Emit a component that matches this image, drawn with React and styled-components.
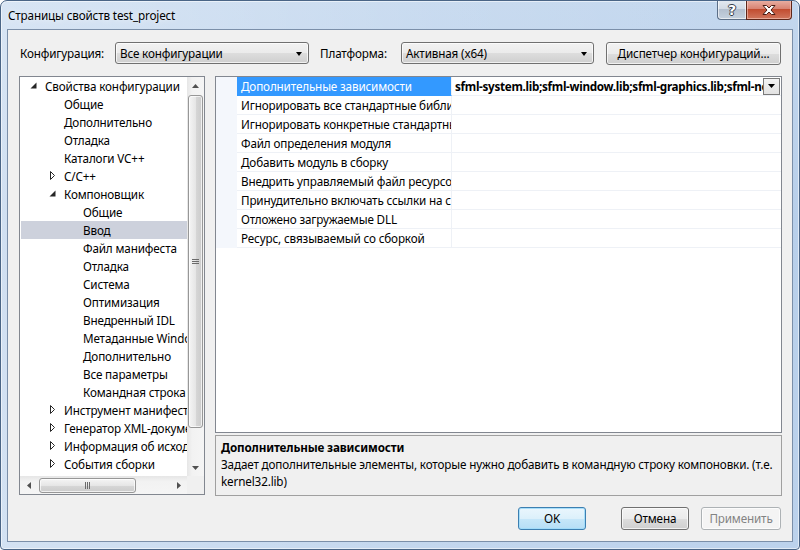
import React from "react";
import styled, { createGlobalStyle } from "styled-components";

const GlobalStyle = createGlobalStyle`
  html, body {
    margin: 0;
    padding: 0;
    background: #ffffff;
  }
  body {
    font-family: "Segoe UI", "Noto Sans", "DejaVu Sans", sans-serif;
    font-size: 11.7px;
    letter-spacing: -0.15px;
    color: #000;
  }
  * { box-sizing: border-box; }
`;

const treeItems = [
  { label: "Свойства конфигурации", level: 0, arrow: "open" },
  { label: "Общие", level: 1 },
  { label: "Дополнительно", level: 1 },
  { label: "Отладка", level: 1 },
  { label: "Каталоги VC++", level: 1 },
  { label: "C/C++", level: 1, arrow: "closed" },
  { label: "Компоновщик", level: 1, arrow: "open" },
  { label: "Общие", level: 2 },
  { label: "Ввод", level: 2, selected: true },
  { label: "Файл манифеста", level: 2 },
  { label: "Отладка", level: 2 },
  { label: "Система", level: 2 },
  { label: "Оптимизация", level: 2 },
  { label: "Внедренный IDL", level: 2 },
  { label: "Метаданные Windows", level: 2 },
  { label: "Дополнительно", level: 2 },
  { label: "Все параметры", level: 2 },
  { label: "Командная строка", level: 2 },
  { label: "Инструмент манифеста", level: 1, arrow: "closed" },
  { label: "Генератор XML-документов", level: 1, arrow: "closed" },
  { label: "Информация об исходном коде", level: 1, arrow: "closed" },
  { label: "События сборки", level: 1, arrow: "closed" },
];

const props = [
  "Дополнительные зависимости",
  "Игнорировать все стандартные библиотеки",
  "Игнорировать конкретные стандартные библиотеки",
  "Файл определения модуля",
  "Добавить модуль в сборку",
  "Внедрить управляемый файл ресурсов",
  "Принудительно включать ссылки на символы",
  "Отложено загружаемые DLL",
  "Ресурс, связываемый со сборкой",
];

const App = () => {
  return (
    <>
      <GlobalStyle />
      <Window>
        <TitleBar>
          <Title>Страницы свойств test_project</Title>
          <CaptionButtons>
            <HelpButton>?</HelpButton>
            <CloseButton>
              <svg width="16" height="12" viewBox="0 0 16 12">
                <path
                  d="M2 1.5 L5.5 1.5 L8 4 L10.5 1.5 L14 1.5 L10 6 L14 10.5 L10.5 10.5 L8 8 L5.5 10.5 L2 10.5 L6 6 Z"
                  fill="#fff"
                  stroke="#4a1d14"
                  strokeWidth="1"
                  strokeLinejoin="round"
                />
              </svg>
            </CloseButton>
          </CaptionButtons>
        </TitleBar>

        <Client>
          <ConfigRow>
            <FieldLabel width={95}>Конфигурация:</FieldLabel>
            <Combo width={194}>
              Все конфигурации
              <ComboArrow />
            </Combo>
            <FieldLabel width={81} gap={11}>Платформа:</FieldLabel>
            <Combo width={193}>
              Активная (x64)
              <ComboArrow />
            </Combo>
            <PushButton width={175} gap={12}>Диспетчер конфигураций...</PushButton>
          </ConfigRow>

          <Main>
            <TreeBox>
              <TreeBody>
                <TreeList>
                  {treeItems.map((item, i) => (
                    <TreeRow key={i} level={item.level} selected={item.selected}>
                      <ArrowSlot>
                        {item.arrow === "open" && (
                          <svg width="8" height="8" viewBox="0 0 8 8" style={{ marginLeft: -1 }}>
                            <polygon points="6.5,0.5 6.5,6.5 0.5,6.5" fill="#262626" />
                          </svg>
                        )}
                        {item.arrow === "closed" && (
                          <svg width="7" height="10" viewBox="0 0 7 10">
                            <polygon points="0.5,0.5 4.5,4.5 0.5,8.5" fill="#fff" stroke="#262626" strokeWidth="1" />
                          </svg>
                        )}
                      </ArrowSlot>
                      {item.label}
                    </TreeRow>
                  ))}
                </TreeList>
                <VScroll>
                  <ScrollArrow>
                    <svg width="7" height="4" viewBox="0 0 7 4"><polygon points="3.5,0 7,4 0,4" fill="#505050" /></svg>
                  </ScrollArrow>
                  <VTrack>
                    <VThumb>
                      <svg width="7" height="7" viewBox="0 0 7 7">
                        <path d="M0 1.5h7M0 3.5h7M0 5.5h7" stroke="#6b6b6b" strokeWidth="1" />
                      </svg>
                    </VThumb>
                  </VTrack>
                  <ScrollArrow>
                    <svg width="7" height="4" viewBox="0 0 7 4"><polygon points="0,0 7,0 3.5,4" fill="#505050" /></svg>
                  </ScrollArrow>
                </VScroll>
              </TreeBody>
              <HBar>
                <HScroll>
                  <ScrollArrow>
                    <svg width="4" height="7" viewBox="0 0 4 7"><polygon points="4,0 4,7 0,3.5" fill="#505050" /></svg>
                  </ScrollArrow>
                  <HTrack>
                    <HThumb>
                      <svg width="7" height="7" viewBox="0 0 7 7">
                        <path d="M1.5 0v7M3.5 0v7M5.5 0v7" stroke="#6b6b6b" strokeWidth="1" />
                      </svg>
                    </HThumb>
                  </HTrack>
                  <ScrollArrow>
                    <svg width="4" height="7" viewBox="0 0 4 7"><polygon points="0,0 4,3.5 0,7" fill="#505050" /></svg>
                  </ScrollArrow>
                </HScroll>
                <Corner />
              </HBar>
            </TreeBox>

            <RightColumn>
              <Grid>
                {props.map((name, i) => (
                  <GridRow key={i}>
                    <Gutter />
                    <NameCell selected={i === 0}>{name}</NameCell>
                    <ValueCell>
                      {i === 0 && (
                        <>
                          <ValueText>sfml-system.lib;sfml-window.lib;sfml-graphics.lib;sfml-network.lib;sfml-audio.lib</ValueText>
                          <ValueDrop>
                            <svg width="7" height="4" viewBox="0 0 7 4"><polygon points="0,0 7,0 3.5,4" fill="#000" /></svg>
                          </ValueDrop>
                        </>
                      )}
                    </ValueCell>
                  </GridRow>
                ))}
              </Grid>
              <Description>
                <DescTitle>Дополнительные зависимости</DescTitle>
                <DescText>
                  Задает дополнительные элементы, которые нужно добавить в командную строку компоновки. (т.е.
                  <br />
                  kernel32.lib)
                </DescText>
              </Description>
            </RightColumn>
          </Main>

          <ButtonRow>
            <PushButton width={68} primary>OK</PushButton>
            <PushButton width={68} gap={35}>Отмена</PushButton>
            <PushButton width={80} gap={12} disabled>Применить</PushButton>
          </ButtonRow>
        </Client>
      </Window>
    </>
  );
};

export default App;

const Window = styled.div`
  width: 800px;
  height: 550px;
  display: flex;
  flex-direction: column;
  padding: 0 6px 7px 6px;
  border: 1px solid #4a6586;
  border-radius: 7px 7px 4px 4px;
  background:
    linear-gradient(90deg, rgba(255,255,255,0.35) 0%, rgba(255,255,255,0.1) 55%, rgba(0,0,0,0) 100%),
    linear-gradient(180deg, #c3d7ee 0%, #b8cfea 40%, #bcd2ec 100%);
  box-shadow: inset 0 0 0 1px rgba(255,255,255,0.55);
  overflow: hidden;
`;

const TitleBar = styled.div`
  height: 28px;
  display: flex;
  justify-content: space-between;
  align-items: center;
  flex-shrink: 0;
`;

const Title = styled.div`
  padding-left: 1px;
  padding-bottom: 1px;
  color: #000;
  text-shadow: 0 0 6px rgba(255,255,255,0.9);
`;

const CaptionButtons = styled.div`
  align-self: flex-start;
  display: flex;
  margin-top: -1px;
  margin-right: 1px;
`;

const HelpButton = styled.div`
  width: 29px;
  height: 20px;
  display: flex;
  align-items: center;
  justify-content: center;
  border: 1px solid #5b6e86;
  border-top: none;
  border-right: none;
  border-radius: 0 0 0 4px;
  background: linear-gradient(180deg, #e4eaf1 0%, #d3dbe5 45%, #b4c0cf 50%, #c5d1de 100%);
  box-shadow: inset 0 0 0 1px rgba(255,255,255,0.6);
  color: #fff;
  font-family: "DejaVu Sans", sans-serif;
  font-weight: bold;
  font-size: 14px;
  letter-spacing: 0;
  text-shadow: -1px 0 #333c48, 1px 0 #333c48, 0 -1px #333c48, 0 1px #333c48;
`;

const CloseButton = styled.div`
  width: 46px;
  height: 20px;
  display: flex;
  align-items: center;
  justify-content: center;
  border: 1px solid #5e2619;
  border-top: none;
  border-radius: 0 0 4px 0;
  background: linear-gradient(180deg, #eab2a6 0%, #d98473 45%, #c24d31 50%, #d0765d 100%);
  box-shadow: inset 0 0 0 1px rgba(255,220,210,0.5);
`;

const Client = styled.div`
  flex: 1;
  display: flex;
  flex-direction: column;
  background: #f0f0f0;
  border: 1px solid #7b8fa9;
  padding: 11px 10px 0 11px;
`;

const ConfigRow = styled.div`
  height: 24px;
  display: flex;
  align-items: center;
  padding-left: 1px;
`;

const FieldLabel = styled.div`
  width: ${(p) => p.width}px;
  margin-left: ${(p) => p.gap || 0}px;
  flex-shrink: 0;
  padding-bottom: 1px;
`;

const Combo = styled.div`
  position: relative;
  width: ${(p) => p.width}px;
  height: 22px;
  flex-shrink: 0;
  display: flex;
  align-items: center;
  padding-left: 4px;
  padding-bottom: 1px;
  border: 1px solid #707070;
  border-radius: 3px;
  background: linear-gradient(180deg, #f2f2f2 0%, #ebebeb 50%, #dddddd 51%, #cfcfcf 100%);
  box-shadow: inset 0 0 0 1px rgba(255,255,255,0.7);
`;

const ComboArrow = styled.span`
  position: absolute;
  right: 6px;
  top: 9px;
  width: 0;
  height: 0;
  border-left: 3.5px solid transparent;
  border-right: 3.5px solid transparent;
  border-top: 4px solid #000;
`;

const PushButton = styled.div`
  width: ${(p) => p.width}px;
  height: 23px;
  margin-left: ${(p) => p.gap || 0}px;
  flex-shrink: 0;
  display: flex;
  align-items: center;
  justify-content: center;
  padding-bottom: 1px;
  border-radius: 3px;
  border: 1px solid ${(p) => (p.primary ? "#3c7fb1" : p.disabled ? "#adb2b5" : "#707070")};
  color: ${(p) => (p.disabled ? "#838383" : "#000")};
  background: ${(p) =>
    p.primary
      ? "linear-gradient(180deg, #eaf6fd 0%, #dcf0fb 50%, #c6e7f9 51%, #b6def6 100%)"
      : p.disabled
      ? "#f4f4f4"
      : "linear-gradient(180deg, #f2f2f2 0%, #ebebeb 50%, #dddddd 51%, #cfcfcf 100%)"};
  box-shadow: inset 0 0 0 1px ${(p) => (p.primary ? "rgba(160,220,250,0.9)" : "rgba(255,255,255,0.7)")};
`;

const Main = styled.div`
  height: 420px;
  display: flex;
  gap: 10px;
  margin-top: 11px;
  flex-shrink: 0;
`;

const TreeBox = styled.div`
  width: 186px;
  height: 419px;
  display: flex;
  flex-direction: column;
  background: #fff;
  border: 1px solid #828790;
  flex-shrink: 0;
`;

const TreeBody = styled.div`
  height: 399px;
  display: flex;
`;

const TreeList = styled.div`
  flex: 1;
  min-width: 0;
  overflow: hidden;
  padding-left: 1px;
`;

const TreeRow = styled.div`
  height: 18px;
  display: flex;
  align-items: center;
  white-space: nowrap;
  overflow: hidden;
  padding-left: ${(p) => 10 + p.level * 19}px;
  padding-bottom: 1px;
  background: ${(p) => (p.selected ? "#cdd1dc" : "transparent")};
`;

const ArrowSlot = styled.span`
  width: 14px;
  flex-shrink: 0;
  display: flex;
  align-items: center;
`;

const VScroll = styled.div`
  width: 17px;
  flex-shrink: 0;
  display: flex;
  flex-direction: column;
  background: linear-gradient(90deg, #e6e6e6 0%, #f2f2f2 30%, #f5f5f5 100%);
`;

const ScrollArrow = styled.div`
  width: 17px;
  height: 17px;
  flex-shrink: 0;
  display: flex;
  align-items: center;
  justify-content: center;
`;

const VTrack = styled.div`
  flex: 1;
  padding: 1px 0 0 1px;
`;

const VThumb = styled.div`
  width: 15px;
  height: 333px;
  display: flex;
  align-items: center;
  justify-content: center;
  border: 1px solid #979797;
  border-radius: 3px;
  background: linear-gradient(90deg, #f5f5f5 0%, #e6e6e6 50%, #d7d7d7 51%, #cbcbcb 100%);
  box-shadow: inset 0 0 0 1px rgba(255,255,255,0.7);
`;

const HBar = styled.div`
  height: 18px;
  display: flex;
`;

const HScroll = styled.div`
  flex: 1;
  display: flex;
  padding-top: 1px;
  background: linear-gradient(180deg, #e6e6e6 0%, #f2f2f2 30%, #f5f5f5 100%);
`;

const HTrack = styled.div`
  flex: 1;
  padding-left: 2px;
  display: flex;
  align-items: center;
`;

const HThumb = styled.div`
  width: 97px;
  height: 15px;
  display: flex;
  align-items: center;
  justify-content: center;
  border: 1px solid #979797;
  border-radius: 3px;
  background: linear-gradient(180deg, #f5f5f5 0%, #e6e6e6 50%, #d7d7d7 51%, #cbcbcb 100%);
  box-shadow: inset 0 0 0 1px rgba(255,255,255,0.7);
`;

const Corner = styled.div`
  width: 17px;
  background: #f0f0f0;
`;

const RightColumn = styled.div`
  flex: 1;
  min-width: 0;
  display: flex;
  flex-direction: column;
  gap: 2px;
`;

const Grid = styled.div`
  height: 357px;
  background: #fff;
  border: 1px solid #828790;
  flex-shrink: 0;
  overflow: hidden;
`;

const GridRow = styled.div`
  height: 19px;
  display: flex;
`;

const Gutter = styled.div`
  width: 21px;
  flex-shrink: 0;
  background: #f4f7fc;
`;

const NameCell = styled.div`
  width: 215px;
  flex-shrink: 0;
  display: flex;
  align-items: center;
  padding-left: 4px;
  padding-bottom: 1px;
  white-space: nowrap;
  overflow: hidden;
  border-right: 1px solid #eef1f6;
  border-bottom: 1px solid ${(p) => (p.selected ? "#3399ff" : "#eef1f6")};
  background: ${(p) => (p.selected ? "#3399ff" : "#fff")};
  color: ${(p) => (p.selected ? "#fff" : "#000")};
`;

const ValueCell = styled.div`
  flex: 1;
  min-width: 0;
  display: flex;
  align-items: center;
  padding-left: 3px;
  border-bottom: 1px solid #eef1f6;
`;

const ValueText = styled.div`
  flex: 1;
  min-width: 0;
  overflow: hidden;
  white-space: nowrap;
  font-weight: bold;
  letter-spacing: -0.3px;
  padding-bottom: 1px;
`;

const ValueDrop = styled.div`
  width: 17px;
  height: 17px;
  flex-shrink: 0;
  margin-right: 1px;
  display: flex;
  align-items: center;
  justify-content: center;
  border: 1px solid #7a7a7a;
  background: linear-gradient(180deg, #f4f4f4 0%, #e2e2e2 100%);
`;

const Description = styled.div`
  flex: 1;
  min-width: 0;
  background: #f0f0f0;
  border: 1px solid #a0a0a0;
  padding: 3px 5px 0 5px;
  line-height: 17px;
  overflow: hidden;
`;

const DescTitle = styled.div`
  font-weight: bold;
  white-space: nowrap;
`;

const DescText = styled.div`
  white-space: nowrap;
  overflow: hidden;
`;

const ButtonRow = styled.div`
  display: flex;
  justify-content: flex-end;
  margin-top: 11px;
  padding-right: 1px;
`;
